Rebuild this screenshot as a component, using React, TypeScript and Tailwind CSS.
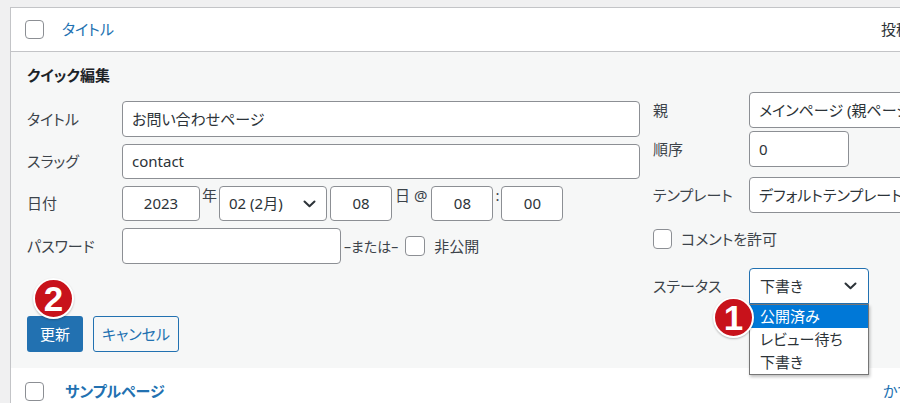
import React from "react";

const Chevron = ({ className = "" }: { className?: string }) => (
  <svg width="13" height="8" viewBox="0 0 13 8" className={className}>
    <path d="M1.5 1.5 L6.5 6.3 L11.5 1.5" fill="none" stroke="#2c3338" strokeWidth="2" strokeLinecap="round" strokeLinejoin="round" />
  </svg>
);

const Box = ({ className = "" }: { className?: string }) => (
  <span className={"block shrink-0 rounded-[4px] border border-[#8c8f94] bg-white " + className} />
);

const Badge = ({ n, className = "" }: { n: string; className?: string }) => (
  <span
    className={
      "absolute flex h-[41px] w-[41px] items-center justify-center rounded-full border-2 border-white bg-[#c8121b] pb-[1px] text-[35px] font-bold leading-none text-white shadow-[0_1px_2px_rgba(0,0,0,0.25)] [font-family:'Liberation_Sans',Arial,sans-serif] " +
      className
    }
  >
    {n}
  </span>
);

export default function App() {
  return (
    <div className="h-[403px] w-[900px] overflow-hidden bg-[#f0f0f1] pl-[10px] pt-[7px] text-[15px] text-[#3c434a] [font-family:'Noto_Sans','Noto_Sans_CJK_JP',sans-serif] [font-feature-settings:'palt']">
      <div className="w-[900px] border-l border-t border-[#c3c4c7] bg-white">
        {/* header */}
        <div className="flex h-[44px] items-center overflow-hidden border-b border-[#c3c4c7] pl-[14px]">
          <Box className="h-[19px] w-[19px]" />
          <span className="ml-[18px] w-[819px] shrink-0 text-[#2271b1]">タイトル</span>
          <span className="shrink-0 whitespace-nowrap text-[#2c3338]">投稿者</span>
        </div>

        {/* quick edit */}
        <div className="h-[316px] bg-[#f6f7f7] pl-[16px]">
          <div className="pt-[13px] text-[15px] font-bold leading-[20px] text-[#1d2327]">クイック編集</div>
          <div className="mt-[7px] flex">
            {/* left column */}
            <div className="w-[613px] shrink-0 pt-[9px]">
              <div className="flex h-[36px] items-center">
                <span className="w-[95px]">タイトル</span>
                <div className="flex h-full flex-1 items-center rounded-[4px] border border-[#8c8f94] bg-white pl-[9px] text-[#2c3338]">お問い合わせページ</div>
              </div>
              <div className="mt-[7px] flex h-[35px] items-center">
                <span className="w-[95px]">スラッグ</span>
                <div className="flex h-full flex-1 items-center rounded-[4px] border border-[#8c8f94] bg-white pl-[9px] text-[#2c3338]">contact</div>
              </div>
              <div className="mt-[7px] flex h-[35px] items-stretch">
                <span className="flex w-[95px] items-center">日付</span>
                <div className="flex w-[78px] items-center justify-center rounded-[4px] border border-[#8c8f94] bg-white text-[#2c3338]">2023</div>
                <span className="mx-[2px] leading-[18px]">年</span>
                <div className="flex w-[108px] items-center justify-between rounded-[4px] border border-[#8c8f94] bg-white pl-[9px] pr-[10px] text-[#2c3338]">
                  <span>02 (2月)</span>
                  <Chevron />
                </div>
                <div className="ml-[3px] flex w-[62px] items-center justify-center rounded-[4px] border border-[#8c8f94] bg-white text-[#2c3338]">08</div>
                <span className="ml-[3px] mr-[4px] whitespace-nowrap leading-[18px]">日 @</span>
                <div className="flex w-[62px] items-center justify-center rounded-[4px] border border-[#8c8f94] bg-white text-[#2c3338]">08</div>
                <span className="mx-[2px] leading-[18px]">:</span>
                <div className="flex w-[62px] items-center justify-center rounded-[4px] border border-[#8c8f94] bg-white text-[#2c3338]">00</div>
              </div>
              <div className="mt-[7px] flex h-[36px] items-center">
                <span className="w-[95px]">パスワード</span>
                <div className="h-full w-[219px] rounded-[4px] border border-[#8c8f94] bg-white" />
                <span className="ml-[3px] text-[14px]">–または–</span>
                <Box className="ml-[7px] h-[20px] w-[20px]" />
                <span className="ml-[9px]">非公開</span>
              </div>
              <div className="mt-[52px] flex gap-[10px]">
                <div className="relative flex h-[36px] w-[56px] items-center justify-center rounded-[3px] bg-[#2271b1] text-white">
                  更新
                  <Badge n="2" className="left-[6px] top-[-38px]" />
                </div>
                <div className="flex h-[36px] w-[86px] items-center justify-center rounded-[3px] border border-[#2271b1] bg-[#f6f7f7] text-[#2271b1]">キャンセル</div>
              </div>
            </div>

            {/* right column */}
            <div className="ml-[13px] w-[300px] shrink-0">
              <div className="flex h-[36px] items-center">
                <span className="w-[96px] shrink-0">親</span>
                <div className="flex h-full w-[230px] shrink-0 items-center whitespace-nowrap rounded-[4px] border border-[#8c8f94] bg-white pl-[9px] text-[#2c3338]">メインページ (親ページなし)</div>
              </div>
              <div className="mt-[3px] flex h-[36px] items-center">
                <span className="w-[96px] shrink-0">順序</span>
                <div className="flex h-full w-[100px] items-center rounded-[4px] border border-[#8c8f94] bg-white pl-[9px] text-[#2c3338]">0</div>
              </div>
              <div className="mt-[10px] flex h-[36px] items-center">
                <span className="w-[96px] shrink-0">テンプレート</span>
                <div className="flex h-full w-[230px] shrink-0 items-center whitespace-nowrap rounded-[4px] border border-[#8c8f94] bg-white pl-[9px] text-[#2c3338]">デフォルトテンプレート</div>
              </div>
              <div className="mt-[16px] flex h-[20px] items-center">
                <Box className="h-[20px] w-[19px]" />
                <span className="ml-[9px]">コメントを許可</span>
              </div>
              <div className="mt-[19px] flex h-[36px] items-center">
                <span className="w-[96px] shrink-0">ステータス</span>
                <div className="relative h-full w-[120px]">
                  <div className="flex h-full items-center justify-between rounded-t-[4px] border border-[#2271b1] bg-white pl-[10px] pr-[11px] text-[#2c3338]">
                    <span>下書き</span>
                    <Chevron />
                  </div>
                  <div className="absolute left-0 top-full z-10 w-[120px] border border-[#767676] bg-white text-[15px] leading-[23px] text-[#2c3338] shadow-[1px_2px_3px_rgba(0,0,0,0.25)]">
                    <div className="bg-[#0078d7] pl-[10px] text-white">公開済み</div>
                    <div className="pl-[10px]">レビュー待ち</div>
                    <div className="pl-[10px]">下書き</div>
                  </div>
                  <Badge n="1" className="left-[-36px] top-[29px] z-20" />
                </div>
              </div>
            </div>
          </div>
        </div>

        {/* next row */}
        <div className="flex h-[40px] items-start overflow-hidden pl-[14px] pt-[14px]">
          <Box className="h-[19px] w-[19px]" />
          <span className="ml-[21px] w-[818px] shrink-0 font-bold leading-[19px] text-[#2271b1]">サンプルページ</span>
          <span className="shrink-0 whitespace-nowrap leading-[19px] text-[#2271b1]">かすみ</span>
        </div>
      </div>
    </div>
  );
}
